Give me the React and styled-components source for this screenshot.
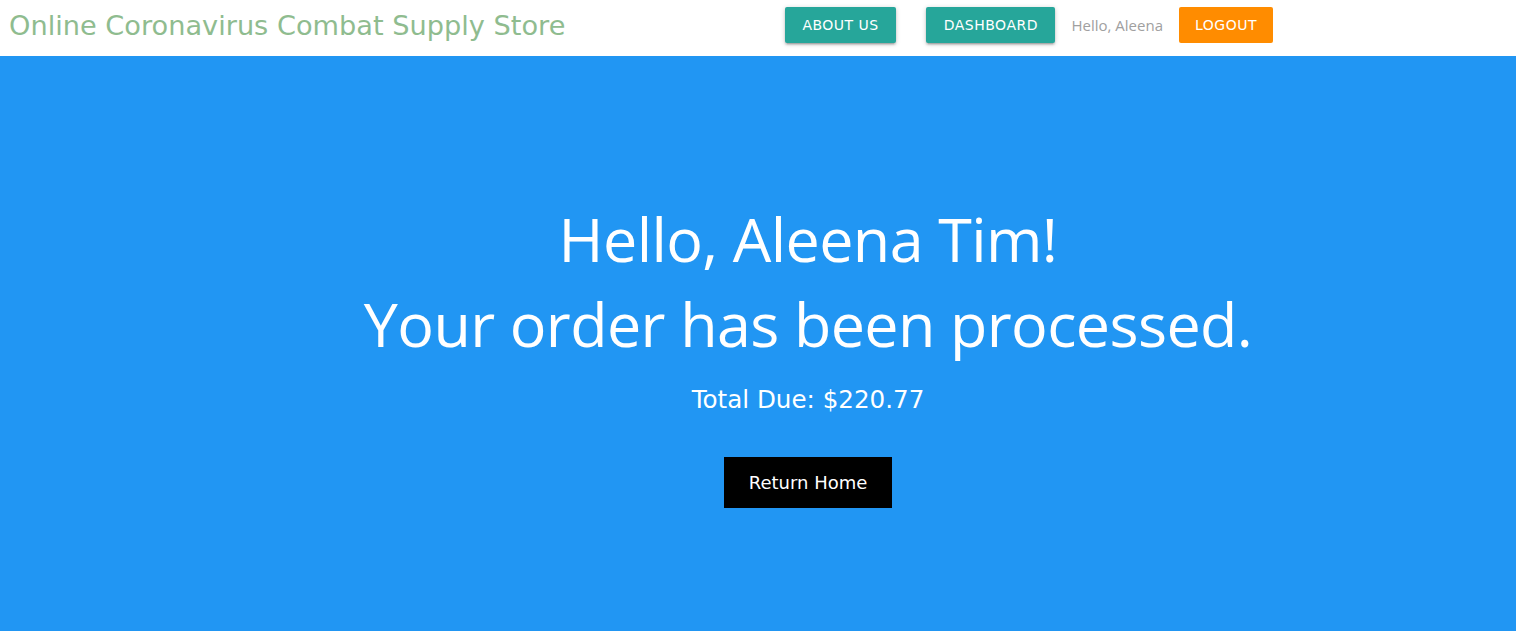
import React from "react";
import styled, { createGlobalStyle } from "styled-components";

const GlobalStyle = createGlobalStyle`
  html, body {
    margin: 0;
    padding: 0;
    height: 100%;
  }
  body {
    font-family: "Open Sans", "Noto Sans", sans-serif;
    background: #2196f3;
  }
  #root {
    min-height: 100vh;
    display: flex;
    flex-direction: column;
  }
`;

const Header = styled.header`
  height: 56px;
  background: #fff;
  display: flex;
  align-items: center;
  padding: 0 243px 0 9px;
`;

const Brand = styled.a`
  font-family: "DejaVu Sans", Verdana, sans-serif;
  font-size: 27.2px;
  color: #8fbc8f;
  text-decoration: none;
  margin-top: -6px;
`;

const Nav = styled.nav`
  margin-left: auto;
  display: flex;
  align-items: center;
  margin-top: -6px;
`;

const NavButton = styled.a`
  display: inline-flex;
  align-items: center;
  justify-content: center;
  height: 36px;
  padding: 0 ${(p) => p.$pad || 17.5}px;
  margin-left: ${(p) => p.$gap || 0}px;
  background: ${(p) => p.$bg || "#26a69a"};
  color: #fff;
  font-family: "DejaVu Sans", Verdana, sans-serif;
  font-size: 14px;
  letter-spacing: 0.5px;
  text-transform: uppercase;
  border-radius: 2px;
  box-shadow: ${(p) =>
    p.$flat
      ? "none"
      : "0 2px 2px 0 rgba(0,0,0,0.14), 0 3px 1px -2px rgba(0,0,0,0.12), 0 1px 5px 0 rgba(0,0,0,0.2)"};
  cursor: pointer;
`;

const Greeting = styled.span`
  margin: 0 16px;
  font-size: 15px;
  color: #a0a0a0;
`;

const Hero = styled.main`
  flex: 1;
  background: #2196f3;
  display: flex;
  flex-direction: column;
  align-items: center;
  padding: 140px 0 0 100px;
  color: #fff;
`;

const Title = styled.h1`
  margin: 0;
  font-family: "Open Sans", "Noto Sans", sans-serif;
  font-weight: 400;
  font-size: 61px;
  line-height: 85px;
  letter-spacing: -0.6px;
  text-align: center;
`;

const Total = styled.p`
  margin: 19px 0 0;
  font-family: "DejaVu Sans", Verdana, sans-serif;
  font-size: 24.6px;
  line-height: 30px;
`;

const ReturnButton = styled.a`
  margin-top: 42px;
  width: 168px;
  height: 51px;
  display: flex;
  align-items: center;
  justify-content: center;
  background: #000;
  color: #fff;
  font-family: "DejaVu Sans", Verdana, sans-serif;
  font-size: 18px;
  text-decoration: none;
  cursor: pointer;
`;

export default function App() {
  return (
    <>
      <GlobalStyle />
      <Header>
        <Brand>Online Coronavirus Combat Supply Store</Brand>
        <Nav>
          <NavButton>About Us</NavButton>
          <NavButton $gap={30}>Dashboard</NavButton>
          <Greeting>Hello, Aleena</Greeting>
          <NavButton $bg="#ff8c00" $pad={16} $flat>
            Logout
          </NavButton>
        </Nav>
      </Header>
      <Hero>
        <Title>
          Hello, Aleena Tim!
          <br />
          Your order has been processed.
        </Title>
        <Total>Total Due: $220.77</Total>
        <ReturnButton>Return Home</ReturnButton>
      </Hero>
    </>
  );
}
